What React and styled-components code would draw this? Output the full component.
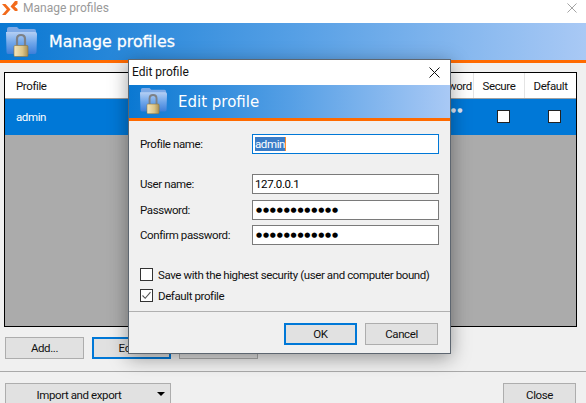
import React from "react";
import styled, { createGlobalStyle } from "styled-components";

const Global = createGlobalStyle`
  html, body { margin: 0; padding: 0; background: #f0f0f0; }
  body { font-family: Roboto, "Liberation Sans", sans-serif; font-size: 11.5px; letter-spacing: -0.4px; color: #111; }
`;

const Window = styled.div`
  position: relative;
  width: 586px;
  height: 403px;
  overflow: hidden;
  background: #f0f0f0;
`;
const TitleBar = styled.div`
  height: 23px;
  background: #fff;
  display: flex;
  align-items: center;
  padding: 0 0 7px 2px;
  box-sizing: border-box;
  color: #9a9a9a;
  gap: 5px;
  font-size: 12px;
  letter-spacing: 0;
`;
const CloseGlyph = styled.svg`
  margin-left: auto;
  margin-right: 9px;
  width: 10px;
  height: 10px;
  display: block;
`;
const Banner = styled.div`
  height: ${p => p.$h}px;
  background: linear-gradient(90deg, #0a78d2 0%, #559fe5 50%, #a9c9f5 100%);
  border-bottom: 3px solid #ff6a00;
  display: flex;
  align-items: center;
  color: #fff;
  font-family: "DejaVu Sans", sans-serif;
  letter-spacing: 0;
  padding-left: ${p => p.$pad}px;
  gap: ${p => p.$gap}px;
  font-size: ${p => p.$size}px;
  -webkit-text-stroke: ${p => p.$stroke}px #fff;
`;
const Content = styled.div`
  padding: 9px 9px 0 4px;
  display: flex;
  flex-direction: column;
`;
const Table = styled.div`
  height: 253px;
  border: 1px solid #000;
  background: #ababab;
  display: flex;
  flex-direction: column;
`;
const gridCols = "1fr 51px 51px 52px";
const HeaderRow = styled.div`
  display: grid;
  grid-template-columns: ${gridCols};
  height: 25px;
  background: #fff;
  border-bottom: 1px solid #a0a0a0;
`;
const HeaderCell = styled.div`
  display: flex;
  align-items: center;
  justify-content: ${p => (p.$left ? "flex-start" : "center")};
  padding-left: ${p => (p.$left ? 11 : 0)}px;
  padding-top: 1px;
  border-left: ${p => (p.$left ? "none" : "1px solid #e4e4e4")};
`;
const DataRow = styled.div`
  display: grid;
  grid-template-columns: ${gridCols};
  height: 36px;
  background: #0078d7;
  color: #fff;
`;
const DataCell = styled.div`
  display: flex;
  align-items: center;
  padding-left: 11px;
`;
const BoxCell = styled.div`
  display: flex;
  align-items: center;
  justify-content: center;
  padding: 0 0 2px 9px;
`;
const DotsCell = styled.div`
  display: flex;
  justify-content: flex-end;
  padding: 6px 9px 0 0;
  color: #dfe9f6;
  font-family: "DejaVu Sans", sans-serif;
  font-size: 6px;
  letter-spacing: 1.4px;
  line-height: 10px;
`;
const CellBox = styled.span`
  width: 11px;
  height: 11px;
  flex: none;
  background: #fff;
  border: 1px solid #222;
  display: block;
`;
const ButtonRow = styled.div`
  display: flex;
  gap: 8px;
  margin: 10px 0 0 1px;
`;
const Btn = styled.button`
  width: ${p => p.$w || 79}px;
  height: ${p => p.$h || 22}px;
  box-sizing: border-box;
  padding: 0 ${p => p.$rpad || 0}px 0 0;
  background: #e1e1e1;
  border: ${p => (p.$primary ? "2px solid #0078d7" : "1px solid #adadad")};
  font: inherit;
  letter-spacing: inherit;
  color: #111;
  position: relative;
`;
const Caret = styled.span`
  position: absolute;
  right: 5px;
  top: 8px;
  width: 0;
  height: 0;
  border-left: 4px solid transparent;
  border-right: 4px solid transparent;
  border-top: 4px solid #000;
`;
const Rule = styled.div`
  height: 1px;
  background: #a9a9a9;
  margin-top: 12px;
`;
const FooterRow = styled.div`
  display: flex;
  justify-content: space-between;
  padding: 11px 10px 0 5px;
`;
const Dialog = styled.div`
  position: absolute;
  left: 128px;
  top: 59px;
  width: 323px;
  height: 295px;
  box-sizing: border-box;
  border: 1px solid #5d6670;
  background: #f0f0f0;
  box-shadow: 0 4px 18px rgba(0,0,0,.38);
  display: flex;
  flex-direction: column;
`;
const DialogTitle = styled.div`
  height: 25px;
  box-sizing: border-box;
  background: #fff;
  display: flex;
  align-items: center;
  padding: 0 10px 1px 3px;
  justify-content: space-between;
  font-size: 12px;
  letter-spacing: 0;
`;
const DialogClose = styled.svg`
  width: 11px;
  height: 11px;
  display: block;
`;
const DialogBody = styled.div`
  padding: 13px 11px 0 11px;
  display: flex;
  flex-direction: column;
  flex: 1;
`;
const FieldRow = styled.div`
  display: grid;
  grid-template-columns: 112px 187px;
  align-items: center;
  height: 20px;
  margin-top: ${p => p.$mt || 0}px;
`;
const Input = styled.div`
  height: 20px;
  box-sizing: border-box;
  background: #fff;
  border: 1px solid ${p => (p.$active ? "#0078d7" : "#7a7a7a")};
  display: flex;
  align-items: center;
  padding-left: 2px;
  color: #000;
`;
const Selected = styled.span`
  background: #3a7cc7;
  color: #fff;
  line-height: 14px;
  border-right: 1px solid #ff8c2a;
`;
const Masked = styled.span`
  font-family: "DejaVu Sans", sans-serif;
  font-size: 7px;
  letter-spacing: 0.8px;
  padding-left: 1px;
`;
const CheckRow = styled.div`
  display: flex;
  align-items: center;
  gap: 5px;
  height: 13px;
  white-space: nowrap;
  margin-top: ${p => p.$mt}px;
`;
const CheckBox = styled.span`
  width: 11px;
  height: 11px;
  flex: none;
  background: #fff;
  border: 1px solid #333;
  display: flex;
  align-items: center;
  justify-content: center;
`;
const DialogRule = styled.div`
  height: 1px;
  background: #b0b0b0;
`;
const DialogFooter = styled.div`
  display: flex;
  justify-content: flex-end;
  gap: 8px;
  padding: 11px 12px 8px 0;
`;

function Folder({ size, id }) {
  return (
    <svg width={size} height={size * 30 / 31} viewBox="0 0 31 30" style={{ display: "block", flex: "none" }}>
      <defs>
        <linearGradient id={id + "f"} x1="0" y1="0" x2="0" y2="1">
          <stop offset="0" stopColor="#b4cff4" />
          <stop offset="0.5" stopColor="#6fa6ea" />
          <stop offset="1" stopColor="#3d7ed9" />
        </linearGradient>
        <linearGradient id={id + "l"} x1="0" y1="0" x2="1" y2="0">
          <stop offset="0" stopColor="#f4e6bc" />
          <stop offset="0.6" stopColor="#dcc588" />
          <stop offset="1" stopColor="#a88f54" />
        </linearGradient>
      </defs>
      <path d="M1 2 Q1 0 3 0 L11 0 L13 2 L28 2 Q30 2 30 4 L30 8 L1 8 Z" fill="#7eaae6" />
      <path d="M0 5 L29 5 Q31 5 31 7 L30.500 25 Q30.500 27 28.500 27 L2 27 Q.5 27 .5 25 Z" fill={`url(#${id}f)`} />
      <path d="M11 19 L11 12 Q11 8 15 8 Q19 8 19 12 L19 19" fill="none" stroke="#7d8186" strokeWidth="2.200" />
      <rect x="8" y="18.500" width="14" height="11" rx="1" fill={`url(#${id}l)`} stroke="#8a7440" strokeWidth="0.600" />
    </svg>
  );
}

function Logo() {
  return (
    <svg width="16" height="15" viewBox="0 0 16 15" style={{ display: "block" }}>
      <path d="M0 3 L3.500 3 L8.500 8.500 L3.500 14 L0 14 L4.800 8.500 Z" fill="#f26a1b" />
      <path d="M15.500 0 L15.500 3 L12.500 5.500 L15.500 8 L15.500 10 L13 10 L8.500 5.500 L13 0 Z" fill="#f26a1b" />
    </svg>
  );
}

function X({ as: C, color }) {
  return (
    <C viewBox="0 0 11 11">
      <path d="M.5 .5 L10.500 10.500 M10.500 .5 L.5 10.500" stroke={color} strokeWidth="1" fill="none" />
    </C>
  );
}

export default function App() {
  return (
    <Window>
      <Global />
      <TitleBar>
        <Logo />
        Manage profiles
        <X as={CloseGlyph} color="#9a9a9a" />
      </TitleBar>
      <Banner $h={37} $pad={6} $gap={12} $size={15.800} $stroke={0.300}>
        <Folder size={31} id="a" />
        Manage profiles
      </Banner>
      <Content>
        <Table>
          <HeaderRow>
            <HeaderCell $left>Profile</HeaderCell>
            <HeaderCell>Password</HeaderCell>
            <HeaderCell>Secure</HeaderCell>
            <HeaderCell>Default</HeaderCell>
          </HeaderRow>
          <DataRow>
            <DataCell>admin</DataCell>
            <DotsCell>●●●●</DotsCell>
            <BoxCell><CellBox /></BoxCell>
            <BoxCell><CellBox /></BoxCell>
          </DataRow>
        </Table>
        <ButtonRow>
          <Btn>Add...</Btn>
          <Btn $primary>Edit...</Btn>
          <Btn>Delete</Btn>
        </ButtonRow>
      </Content>
      <Rule />
      <FooterRow>
        <Btn $w={166} $h={24} $rpad={18}>Import and export<Caret /></Btn>
        <Btn $w={73} $h={24}>Close</Btn>
      </FooterRow>
      <Dialog>
        <DialogTitle>
          Edit profile
          <X as={DialogClose} color="#111" />
        </DialogTitle>
        <Banner $h={33} $pad={11} $gap={11} $size={15} $stroke={0}>
          <Folder size={27} id="b" />
          Edit profile
        </Banner>
        <DialogBody>
          <FieldRow>
            Profile name:
            <Input $active><Selected>admin</Selected></Input>
          </FieldRow>
          <FieldRow $mt={20}>
            User name:
            <Input>127.0.0.1</Input>
          </FieldRow>
          <FieldRow $mt={6}>
            Password:
            <Input><Masked>●●●●●●●●●●●●</Masked></Input>
          </FieldRow>
          <FieldRow $mt={5}>
            Confirm password:
            <Input><Masked>●●●●●●●●●●●●</Masked></Input>
          </FieldRow>
          <CheckRow $mt={23}>
            <CheckBox />
            Save with the highest security (user and computer bound)
          </CheckRow>
          <CheckRow $mt={8}>
            <CheckBox>
              <svg width="11" height="11" viewBox="0 0 11 11">
                <path d="M1.500 5.500 L4.200 8.300 L9.500 2.200" fill="none" stroke="#555" strokeWidth="1.100" />
              </svg>
            </CheckBox>
            Default profile
          </CheckRow>
        </DialogBody>
        <DialogRule />
        <DialogFooter>
          <Btn $w={73} $primary>OK</Btn>
          <Btn $w={73}>Cancel</Btn>
        </DialogFooter>
      </Dialog>
    </Window>
  );
}
